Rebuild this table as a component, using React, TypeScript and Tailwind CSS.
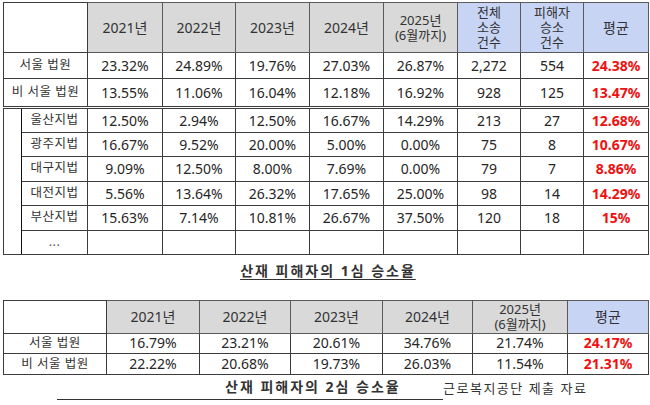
import React from "react";

const font = { fontFamily: '"Noto Sans", "Noto Sans CJK KR", sans-serif' };

type Row1 = { label: string; rates: string[]; total: string; wins: string; avg: string };

const mainRows: Row1[] = [
  { label: "서울 법원", rates: ["23.32%", "24.89%", "19.76%", "27.03%", "26.87%"], total: "2,272", wins: "554", avg: "24.38%" },
  { label: "비 서울 법원", rates: ["13.55%", "11.06%", "16.04%", "12.18%", "16.92%"], total: "928", wins: "125", avg: "13.47%" },
];

const subRows: Row1[] = [
  { label: "울산지법", rates: ["12.50%", "2.94%", "12.50%", "16.67%", "14.29%"], total: "213", wins: "27", avg: "12.68%" },
  { label: "광주지법", rates: ["16.67%", "9.52%", "20.00%", "5.00%", "0.00%"], total: "75", wins: "8", avg: "10.67%" },
  { label: "대구지법", rates: ["9.09%", "12.50%", "8.00%", "7.69%", "0.00%"], total: "79", wins: "7", avg: "8.86%" },
  { label: "대전지법", rates: ["5.56%", "13.64%", "26.32%", "17.65%", "25.00%"], total: "98", wins: "14", avg: "14.29%" },
  { label: "부산지법", rates: ["15.63%", "7.14%", "10.81%", "26.67%", "37.50%"], total: "120", wins: "18", avg: "15%" },
];

const secondRows = [
  { label: "서울 법원", rates: ["16.79%", "23.21%", "20.61%", "34.76%", "21.74%"], avg: "24.17%" },
  { label: "비 서울 법원", rates: ["22.22%", "20.68%", "19.73%", "26.03%", "11.54%"], avg: "21.31%" },
];

const years = ["2021년", "2022년", "2023년", "2024년"];

const cell = "border border-[#3c3c3c] text-center align-middle text-[14px] text-[#262626] p-0";
const grayHead = "border border-[#5a5a5a] bg-[#d9d9d9] text-center align-middle text-[14px] text-[#333] font-normal";
const blueHead = "border border-[#5a5a5a] bg-[#c7d4f3] text-center align-middle text-[14px] text-[#333] font-normal";
const label = "border border-[#3c3c3c] text-center align-middle text-[12.5px] text-[#333] tracking-[0.5px]";
const avgCell = "border border-[#3c3c3c] text-center align-middle text-[14px] font-bold text-[#f01010]";

// stacked header text, e.g. 전체 / 소송 / 건수
function Stack({ lines }: { lines: string[] }) {
  return (
    <div className="flex flex-col items-center">
      {lines.map((l) => (
        <span key={l} className="block text-[13px] leading-[15px]">
          {l}
        </span>
      ))}
    </div>
  );
}

export default function App() {
  return (
    <div className="w-[650px] h-[405px] bg-white overflow-hidden" style={font}>
      {/* --- 1심 TABLE --- */}
      <table className="ml-[3px] mt-[2px] w-[645px] table-fixed border-collapse">
        <colgroup>
          <col className="w-[18px]" />
          <col className="w-[66px]" />
          <col className="w-[75px]" />
          <col className="w-[73px]" />
          <col className="w-[74px]" />
          <col className="w-[74px]" />
          <col className="w-[74px]" />
          <col className="w-[63px]" />
          <col className="w-[63px]" />
          <col className="w-[65px]" />
        </colgroup>
        <thead>
          <tr className="h-[50px]">
            <th colSpan={2} className="border border-[#3c3c3c] bg-white" />
            {years.map((y) => (
              <th key={y} className={grayHead}>
                {y}
              </th>
            ))}
            <th className={grayHead}>
              <Stack lines={["2025년", "(6월까지)"]} />
            </th>
            <th className={blueHead}>
              <Stack lines={["전체", "소송", "건수"]} />
            </th>
            <th className={blueHead}>
              <Stack lines={["피해자", "승소", "건수"]} />
            </th>
            <th className={blueHead}>평균</th>
          </tr>
        </thead>
        <tbody>
          {mainRows.map((r, i) => {
            const dbl = i === 1 ? "border-b-[3px] border-double" : "";
            return (
              <tr key={r.label} className={i === 0 ? "h-[26px]" : "h-[29px]"}>
                <td colSpan={2} className={`${label} ${dbl}`}>
                  {r.label}
                </td>
                {[...r.rates, r.total, r.wins].map((v, j) => (
                  <td key={j} className={`${cell} ${dbl}`}>
                    {v}
                  </td>
                ))}
                <td className={`${avgCell} ${dbl}`}>{r.avg}</td>
              </tr>
            );
          })}
          {subRows.map((r, i) => (
            <tr key={r.label} className="h-[24.5px]">
              {i === 0 && <td rowSpan={6} className="border border-[#3c3c3c] border-r-[#111]" />}
              <td className={label}>{r.label}</td>
              {[...r.rates, r.total, r.wins].map((v, j) => (
                <td key={j} className={cell}>
                  {v}
                </td>
              ))}
              <td className={avgCell}>{r.avg}</td>
            </tr>
          ))}
          <tr className="h-[24px]">
            <td className={`${label} text-[10px] text-[#555]`}>...</td>
            {Array.from({ length: 8 }).map((_, j) => (
              <td key={j} className={cell} />
            ))}
          </tr>
        </tbody>
      </table>

      <div className="flex justify-center mt-[7px] pl-[6px]">
        <span className="text-[14px] font-bold text-[#333] underline underline-offset-[3px] decoration-1 tracking-[2px] leading-[17px]">
          산재 피해자의 1심 승소율
        </span>
      </div>

      {/* --- 2심 TABLE --- */}
      <table className="ml-[3px] mt-[21px] w-[645px] table-fixed border-collapse">
        <colgroup>
          <col className="w-[103px]" />
          <col className="w-[93px]" />
          <col className="w-[91px]" />
          <col className="w-[92px]" />
          <col className="w-[90px]" />
          <col className="w-[95px]" />
          <col className="w-[81px]" />
        </colgroup>
        <thead>
          <tr className="h-[33px]">
            <th className="border border-[#3c3c3c] bg-white" />
            {years.map((y) => (
              <th key={y} className={grayHead}>
                {y}
              </th>
            ))}
            <th className={grayHead}>
              <Stack lines={["2025년", "(6월까지)"]} />
            </th>
            <th className={blueHead}>평균</th>
          </tr>
        </thead>
        <tbody>
          {secondRows.map((r) => (
            <tr key={r.label} className="h-[20.5px]">
              <td className={`${label} leading-[18px]`}>{r.label}</td>
              {r.rates.map((v, j) => (
                <td key={j} className={`${cell} leading-[18px]`}>
                  {v}
                </td>
              ))}
              <td className={`${avgCell} leading-[18px]`}>{r.avg}</td>
            </tr>
          ))}
        </tbody>
      </table>

      <div className="flex items-end mt-[3px]">
        <span className="ml-[57px] w-[386px] pl-[168px] border-b border-[#333] text-[14px] font-bold text-[#333] tracking-[2px] leading-[18px] pb-[3px]">
          산재 피해자의 2심 승소율
        </span>
        <span className="text-[13px] text-[#333] tracking-[1.5px] leading-[18px] pb-[3px]">근로복지공단 제출 자료</span>
      </div>
    </div>
  );
}
